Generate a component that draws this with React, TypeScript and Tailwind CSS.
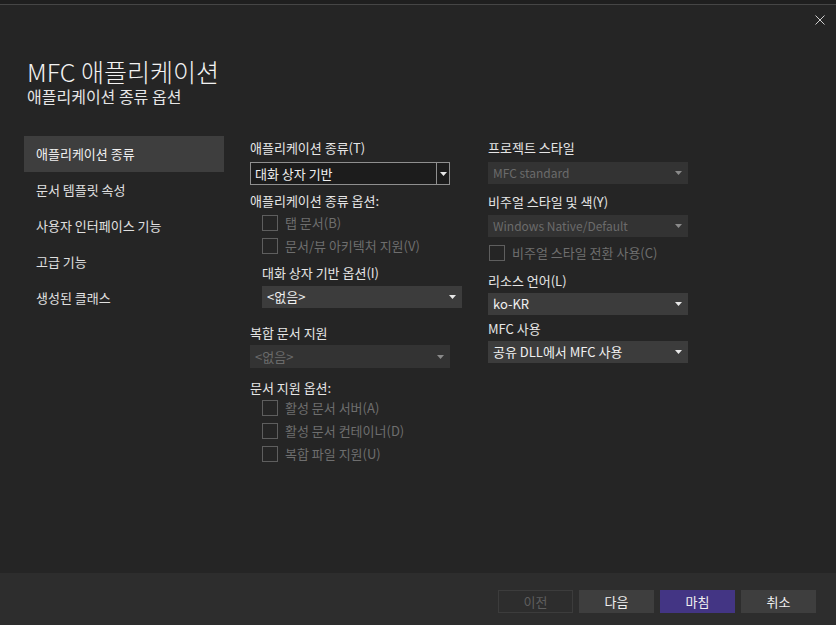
import React from "react"

const font = { fontFamily: '"Noto Sans CJK KR", "Noto Sans", sans-serif' }

const Arrow = ({ dim }: { dim?: boolean }) => (
  <svg width="7" height="4" viewBox="0 0 7 4" className="shrink-0">
    <path d="M0 0H7L3.5 4Z" fill={dim ? "#8a8a8a" : "#e8e8e8"} />
  </svg>
)

const Dropdown = ({ value, disabled, className = "" }: { value: string; disabled?: boolean; className?: string }) => (
  <div
    className={`flex h-[22px] w-[200px] items-center justify-between pr-[6px] pl-[5px] ${
      disabled ? "bg-[#333333] text-[#6b6b6b]" : "bg-[#3c3c3c] text-[#f0f0f0]"
    } ${className}`}
  >
    <span>{value}</span>
    <Arrow dim={disabled} />
  </div>
)

const Check = ({ label, className = "" }: { label: string; className?: string }) => (
  <div className={`flex h-[16px] items-center gap-[7px] text-[13px] text-[#6e6e6e] ${className}`}>
    <span className="h-[16px] w-[16px] border border-[#5e5e5e]" />
    <span>{label}</span>
  </div>
)

const Label = ({ children, className = "" }: { children: React.ReactNode; className?: string }) => (
  <div className={`h-[16px] text-[13px] leading-[16px] text-[#e6e6e6] ${className}`}>{children}</div>
)

const navItems = ["애플리케이션 종류", "문서 템플릿 속성", "사용자 인터페이스 기능", "고급 기능", "생성된 클래스"]

export default function App() {
  return (
    <div style={font} className="flex h-[625px] w-[836px] flex-col bg-[#252525] text-[#e6e6e6]">
      <div className="h-[4px] bg-[#1f1f1f]" />
      <div className="h-[1px] bg-[#464646]" />
      <div className="flex justify-end pt-[10px] pr-[10px]">
        <svg width="10" height="10" viewBox="0 0 10 10" className="mr-[1px]">
          <path d="M0.5 0.5L9.5 9.5M9.5 0.5L0.5 9.5" stroke="#cfcfcf" strokeWidth="1" />
        </svg>
      </div>

      <div className="pl-[27px] pt-[31px]">
        <h1 className="text-[25px] leading-[30px] font-light text-[#f2f2f2]">MFC 애플리케이션</h1>
        <h2 className="text-[16px] leading-[20px] text-[#e6e6e6]">애플리케이션 종류 옵션</h2>
      </div>

      <div className="flex flex-1 pt-[30px]">
        <nav className="ml-[24px] flex w-[200px] flex-col">
          {navItems.map((item, i) => (
            <div
              key={item}
              className={`flex h-[36px] items-center pl-[12px] text-[13px] ${
                i === 0 ? "bg-[#3e3e3e] text-[#f0f0f0]" : "text-[#e0e0e0]"
              }`}
            >
              {item}
            </div>
          ))}
        </nav>

        <div className="ml-[26px] flex w-[238px] flex-col pt-[4px]">
          <Label>애플리케이션 종류(T)</Label>
          <div className="mt-[6px] flex h-[23px] w-[200px] border border-[#8f8f8f] bg-[#1c1c1c]">
            <div className="flex flex-1 items-center pl-[4px] text-[13px] text-[#f0f0f0]">대화 상자 기반</div>
            <div className="flex w-[13px] items-center justify-center border-l border-[#8f8f8f]">
              <Arrow />
            </div>
          </div>
          <Label className="mt-[8px]">애플리케이션 종류 옵션:</Label>
          <Check label="탭 문서(B)" className="mt-[6px] ml-[12px]" />
          <Check label="문서/뷰 아키텍처 지원(V)" className="mt-[7px] ml-[12px]" />
          <Label className="mt-[11px] ml-[12px]">대화 상자 기반 옵션(I)</Label>
          <Dropdown value="<없음>" className="mt-[5px] ml-[12px] text-[13px]" />
          <Label className="mt-[17px]">복합 문서 지원</Label>
          <Dropdown value="<없음>" disabled className="mt-[4px] h-[23px] text-[13px]" />
          <Label className="mt-[12px]">문서 지원 옵션:</Label>
          <Check label="활성 문서 서버(A)" className="mt-[4px] ml-[12px]" />
          <Check label="활성 문서 컨테이너(D)" className="mt-[7px] ml-[12px]" />
          <Check label="복합 파일 지원(U)" className="mt-[7px] ml-[12px]" />
        </div>

        <div className="flex w-[210px] flex-col pt-[4px]">
          <Label>프로젝트 스타일</Label>
          <Dropdown value="MFC standard" disabled className="mt-[6px] text-[12px]" />
          <Label className="mt-[10px]">비주얼 스타일 및 색(Y)</Label>
          <Dropdown value="Windows Native/Default" disabled className="mt-[5px] text-[12px]" />
          <Check label="비주얼 스타일 전환 사용(C)" className="mt-[8px] ml-[1px]" />
          <Label className="mt-[12px]">리소스 언어(L)</Label>
          <Dropdown value="ko-KR" className="mt-[4px] text-[13px]" />
          <Label className="mt-[6px]">MFC 사용</Label>
          <Dropdown value="공유 DLL에서 MFC 사용" className="mt-[4px] text-[13px]" />
        </div>
      </div>

      <footer className="flex h-[52px] items-start justify-end gap-[6px] bg-[#2d2d2d] pt-[17px] pr-[20px]">
        <button className="h-[23px] w-[75px] border border-[#3c3c3c] text-[13px] text-[#5e5e5e]">이전</button>
        <button className="h-[23px] w-[75px] bg-[#3e3e3e] text-[13px] text-[#f0f0f0]">다음</button>
        <button className="h-[23px] w-[75px] bg-[#433584] text-[13px] text-[#f0f0f0]">마침</button>
        <button className="h-[23px] w-[75px] bg-[#3e3e3e] text-[13px] text-[#f0f0f0]">취소</button>
      </footer>
    </div>
  )
}
